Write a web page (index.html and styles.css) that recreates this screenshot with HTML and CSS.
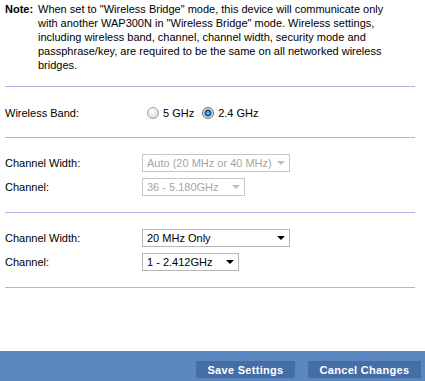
FILE: index.html
```html
<!DOCTYPE html>
<html lang="en">
<head>
    <meta charset="UTF-8">
    <meta name="viewport" content="width=device-width, initial-scale=1.0">
    <title>Wireless Bridge</title>
    <link rel="stylesheet" href="styles.css">
</head>
<body>
    <div class="page">
        <div class="note">
            <b class="note-label">Note:</b>
            <span class="note-text">When set to "Wireless Bridge" mode, this device will communicate only with another WAP300N in "Wireless Bridge" mode. Wireless settings, including wireless band, channel, channel width, security mode and passphrase/key, are required to be the same on all networked wireless bridges.</span>
        </div>
        <hr class="sep sep-note">

        <div class="row band">
            <span class="label">Wireless Band:</span>
            <div class="radios">
                <label class="radio"><input type="radio" name="band" value="5"> 5 GHz</label>
                <label class="radio"><input type="radio" name="band" value="2.4" checked> 2.4 GHz</label>
            </div>
        </div>
        <hr class="sep sep-band">

        <div class="group">
            <div class="row">
                <span class="label">Channel Width:</span>
                <span class="sel disabled wide"><select disabled><option>Auto (20 MHz or 40 MHz)</option></select></span>
            </div>
            <div class="row">
                <span class="label">Channel:</span>
                <span class="sel disabled mid"><select disabled><option>36 - 5.180GHz</option></select></span>
            </div>
        </div>
        <hr class="sep sep-group">

        <div class="group">
            <div class="row">
                <span class="label">Channel Width:</span>
                <span class="sel wide"><select><option>20 MHz Only</option><option>Auto (20 MHz or 40 MHz)</option></select></span>
            </div>
            <div class="row">
                <span class="label">Channel:</span>
                <span class="sel short"><select><option>1 - 2.412GHz</option><option>6 - 2.437GHz</option><option>11 - 2.462GHz</option></select></span>
            </div>
        </div>
        <hr class="sep sep-last">
    </div>

    <div class="footer">
        <button class="btn save">Save Settings</button>
        <button class="btn cancel">Cancel Changes</button>
    </div>
</body>
</html>
```

FILE: styles.css
```css
body {
    margin: 0;
    font-family: "Liberation Sans", Arial, sans-serif;
    font-size: 11px;
    color: #000;
    background: #fff;
}
.page {
    padding: 2px 10px 0 5px;
}
.note {
    display: flex;
    line-height: 14px;
}
.note-label {
    flex: 0 0 33px;
}
.note-text {
    width: 354px;
}
.sep {
    border: 0;
    border-top: 1px solid #b0b0ea;
    margin: 0;
}
.sep-note {
    margin-top: 14px;
}
.sep-band {
    margin-top: 14px;
}
.sep-group {
    margin-top: 16px;
}
.sep-last {
    margin-top: 16px;
}
.row {
    display: flex;
    align-items: center;
    height: 18px;
}
.band {
    height: 20px;
    margin-top: 16px;
}
.group {
    margin-top: 16px;
    display: flex;
    flex-direction: column;
    gap: 6px;
}
.label {
    flex: 0 0 137px;
}
.radios {
    display: flex;
    align-items: center;
    gap: 8px;
    padding-left: 5px;
}
.radio {
    display: flex;
    align-items: center;
    gap: 4px;
}
.radio input {
    appearance: none;
    margin: 0;
    width: 12px;
    height: 12px;
    border-radius: 50%;
    border: 1px solid #a0a0a0;
    background: radial-gradient(circle at 40% 35%, #fff 0, #ececec 45%, #c8c8c8 100%);
}
.radio input:checked {
    border-color: #6a6a6a;
    background: radial-gradient(circle at 50% 50%, #7fd0f5 0, #1b7fc2 30%, #0b3f6e 45%, #d8d8d8 55%, #f4f4f4 80%, #c8c8c8 100%);
}
.sel {
    position: relative;
    display: inline-block;
}
.sel select {
    appearance: none;
    -webkit-appearance: none;
    height: 18px;
    margin: 0;
    padding: 0 0 0 4px;
    border: 1px solid #b7b7b7;
    border-radius: 0;
    background: #fff;
    font-family: inherit;
    font-size: 11px;
    color: #000;
    outline: none;
}
.sel::after {
    content: "";
    position: absolute;
    right: 5px;
    top: 7px;
    border-left: 4px solid transparent;
    border-right: 4px solid transparent;
    border-top: 4px solid #000;
    pointer-events: none;
}
.sel.disabled select {
    color: #808080;
    border-color: #b0b0b0;
}
.sel.disabled::after {
    border-top-color: #bdbdbd;
}
.wide select {
    width: 148px;
}
.mid select {
    width: 103px;
}
.short select {
    width: 97px;
}
.footer {
    margin-top: 63px;
    height: 30px;
    background: #5b87c0;
    display: flex;
    justify-content: flex-end;
    align-items: flex-start;
    gap: 13px;
    padding: 10px 4px 0 0;
    box-sizing: border-box;
}
.btn {
    height: 17px;
    margin: 0;
    padding: 0;
    border: 0;
    background: #456ea7;
    color: #fff;
    font-family: "Liberation Sans", Arial, sans-serif;
    font-weight: bold;
    font-size: 11px;
    letter-spacing: 0.3px;
    cursor: pointer;
}
.save {
    width: 99px;
}
.cancel {
    width: 113px;
}
```
